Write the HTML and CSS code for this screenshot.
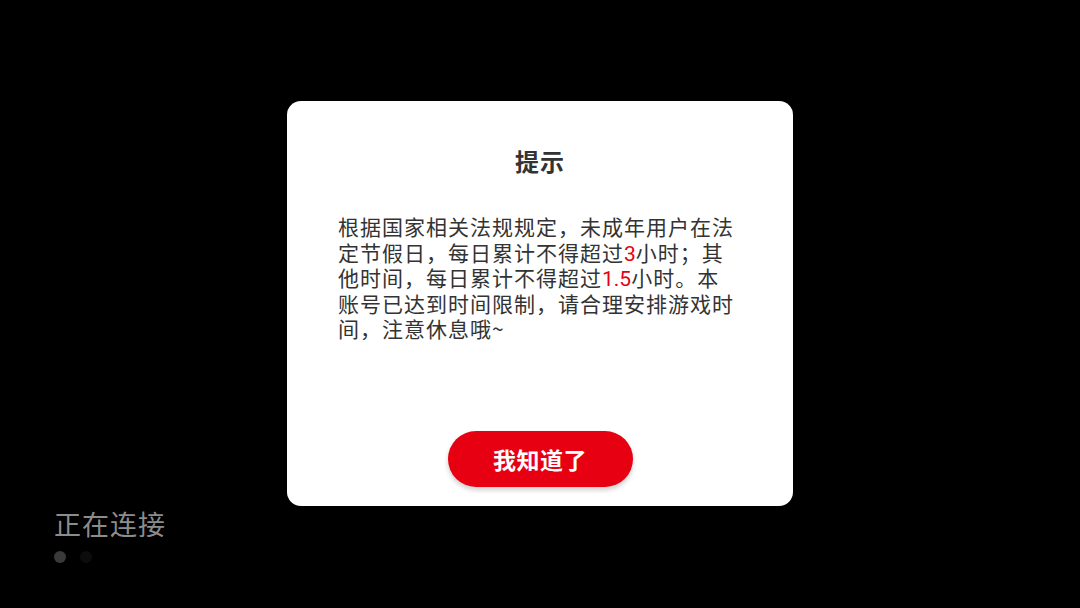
FILE: index.html
```html
<!DOCTYPE html>
<html lang="zh-CN">
<head>
<meta charset="utf-8">
<link rel="stylesheet" href="styles.css">
</head>
<body>
<div class="page">
  <div class="status">
    <div class="status-text">正在连接</div>
    <div class="dots"><span class="dot on"></span><span class="dot"></span></div>
  </div>
</div>
<div class="modal">
  <div class="dialog">
    <div class="title">提示</div>
    <p class="msg">根据国家相关法规规定，未成年用户在法定节假日，每日累计不得超过<span class="num">3</span>小时；其他时间，每日累计不得超过<span class="num">1.5</span>小时。本账号已达到时间限制，请合理安排游戏时间，注意休息哦~</p>
    <button class="btn">我知道了</button>
  </div>
</div>
</body>
</html>
```
FILE: styles.css
```css
html, body {
  margin: 0;
  padding: 0;
  width: 1080px;
  height: 608px;
  background: #000;
  overflow: hidden;
  font-family: "Noto Sans CJK SC", "Noto Sans", sans-serif;
}
.page {
  width: 1080px;
  height: 608px;
  display: flex;
  flex-direction: column;
  justify-content: flex-end;
  box-sizing: border-box;
  padding: 0 0 45px 54px;
}
.status-text {
  color: #8c8c8c;
  font-size: 27px;
  line-height: 30px;
  letter-spacing: 1px;
}
.dots {
  display: flex;
  gap: 14px;
  margin-top: 12px;
}
.dot {
  width: 12px;
  height: 12px;
  border-radius: 50%;
  background: #0c0c0c;
}
.dot.on { background: #3a3a3a; }
.modal {
  position: absolute;
  left: 287px;
  top: 101px;
}
.dialog {
  width: 506px;
  height: 405px;
  box-sizing: border-box;
  background: #fff;
  border-radius: 14px;
  display: flex;
  flex-direction: column;
  align-items: center;
  padding: 44px 50px 19px;
}
.title {
  font-size: 24px;
  line-height: 32px;
  font-weight: 700;
  color: #333;
  letter-spacing: 1px;
}
.msg {
  margin: 37px 0 0 -6px;
  width: 398px;
  font-size: 21px;
  line-height: 25.5px;
  letter-spacing: 1px;
  color: #333;
}
.num {
  color: #e60012;
  font-family: Roboto, "Noto Sans", sans-serif;
  letter-spacing: 0;
  line-height: 1;
}
.btn {
  margin-top: auto;
  width: 185px;
  height: 56px;
  border: none;
  border-radius: 28px;
  background: #e60012;
  color: #fff;
  font-family: "Noto Sans CJK SC", sans-serif;
  font-size: 23px;
  font-weight: 700;
  letter-spacing: 0.5px;
  box-shadow: 0 3px 5px rgba(0,0,0,0.2);
  padding: 0;
}
```
